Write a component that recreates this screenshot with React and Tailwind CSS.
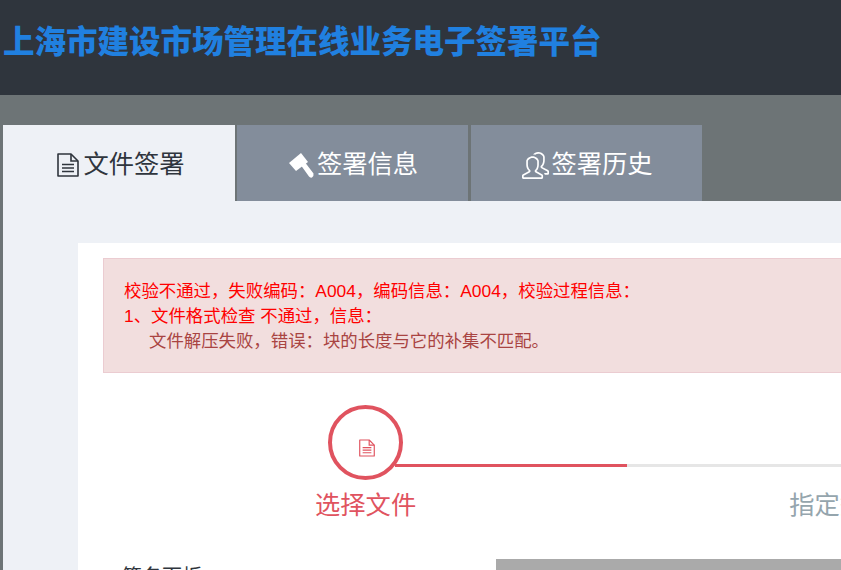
import { SlPeople } from "react-icons/sl";

function DocIcon({ className }) {
  return (
    <svg viewBox="0 0 22 24" fill="none" stroke="currentColor" strokeWidth="1.6" className={className}>
      <path d="M1 1h13l7 7v15H1z" strokeLinejoin="round" />
      <path d="M14 1v7h7" />
      <path d="M5 11.5h12M5 15h12M5 18.5h12" />
    </svg>
  );
}

function GavelIcon({ className }) {
  return (
    <svg viewBox="0 0 25 25" fill="currentColor" className={className}>
      <path d="M0 10 L12 0 L19 9 L7 18 Z" />
      <path d="M11 11 L15 8 L24.5 20.5 Q25 23 23 24.5 Q21 25 20 23.5 Z" />
    </svg>
  );
}

const tabs = [
  { label: "文件签署", icon: <DocIcon className="h-6 w-[22px]" />, active: true, box: "w-[232px] gap-1 pl-1" },
  { label: "签署信息", icon: <GavelIcon className="h-[25px] w-[25px]" />, box: "ml-[2px] w-[231px] gap-[3px] pl-[2px]" },
  { label: "签署历史", icon: <SlPeople size={27} />, box: "ml-[3px] w-[231px] gap-[2px] pl-[2px]" },
];

function Tab({ label, icon, active, box }) {
  return (
    <div
      className={`flex h-[76px] items-center justify-center pt-1 text-[25.3px] ${box} ${
        active ? "bg-[#eef1f6] text-[#2f353d]" : "bg-[#838d9b] text-white"
      }`}
    >
      {icon}
      <span>{label}</span>
    </div>
  );
}

export default function App() {
  return (
    <div
      className="h-[570px] w-[841px] overflow-hidden bg-[#6d7476]"
      style={{ fontFamily: '"Liberation Sans", "Noto Sans CJK SC", sans-serif' }}
    >
      {/* Header */}
      <header className="flex h-[95px] items-start bg-[#2f353d] pl-[3px] pt-[22px]">
        <h1 className="text-[31.5px] font-black leading-[40px] text-[#2080e0]">
          上海市建设市场管理在线业务电子签署平台
        </h1>
      </header>

      <div className="w-[1400px] pl-[3px] pt-[30px]">
        {/* Tabs */}
        <nav className="flex">
          {tabs.map((tab) => (
            <Tab key={tab.label} {...tab} />
          ))}
        </nav>

        {/* Panel */}
        <main className="h-[369px] bg-[#eef1f6] pl-[75px] pt-[42px]">
          <section className="h-full bg-white pl-[25px] pt-[15px]">
            <div className="h-[115px] border border-[#ebccd1] bg-[#f2dede] px-5 py-[20px] text-[17.4px] leading-[25px] text-[#ff0000]">
              <p>校验不通过，失败编码：A004，编码信息：A004，校验过程信息：</p>
              <p>1、文件格式检查 不通过，信息：</p>
              <p className="pl-[25px] text-[#a94442]">文件解压失败，错误：块的长度与它的补集不匹配。</p>
            </div>

            {/* Steps */}
            <div className="mt-[32px] flex items-end pl-[225px]">
              <div className="z-10 flex h-[75px] w-[75px] shrink-0 items-center justify-center rounded-full border-4 border-[#e0535f] pl-[2px] pt-[11px] text-[#e0535f]">
                <DocIcon className="h-[18px] w-4" />
              </div>
              <div className="mb-[13px] ml-[-8px] h-[3px] w-[232px] bg-[#e0535f]" />
              <div className="mb-[13px] h-[3px] w-[400px] bg-[#e6e6e6]" />
            </div>
            <div className="mt-[7px] flex text-[25.3px] leading-[36px]">
              <span className="ml-[212px] text-[#e0535f]">选择文件</span>
              <span className="ml-[373px] text-[#95a5ad]">指定签署位置</span>
            </div>

            <div className="mt-[36px] flex">
              <div className="w-[393px] pl-[19px] pt-1 text-[20px] leading-[28px] text-[#2f353d]">
                签名面板
              </div>
              <div className="h-[100px] flex-1 bg-[#aaaaaa]" />
            </div>
          </section>
        </main>
      </div>
    </div>
  );
}
